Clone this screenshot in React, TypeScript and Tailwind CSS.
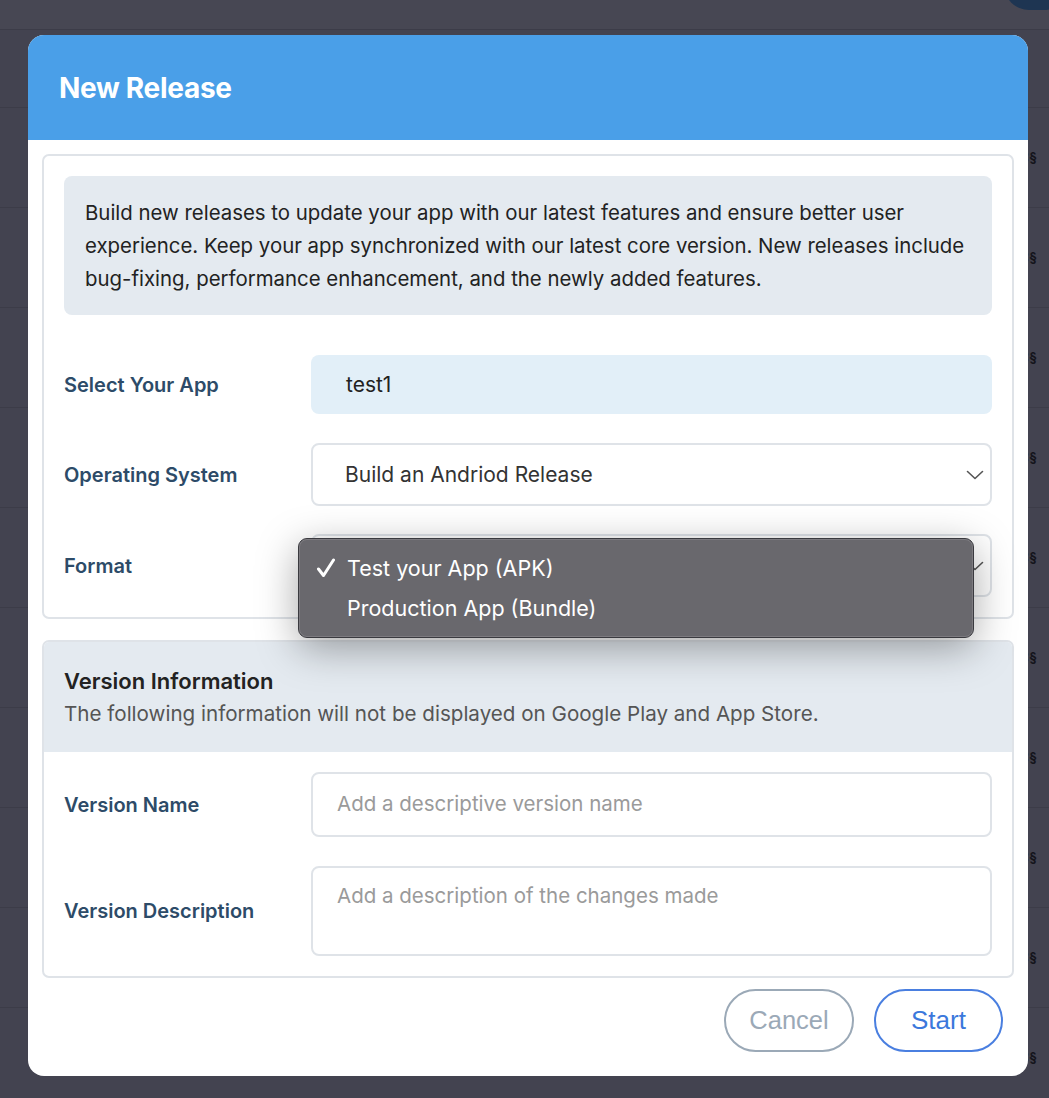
import React from "react";

const rows = [0, 1, 2, 3, 4, 5, 6, 7, 8, 9];

function Chevron() {
  return (
    <svg width="18" height="10" viewBox="0 0 18 10" fill="none">
      <path d="M1.5 1.5 L9 8.5 L16.5 1.5" stroke="#555" strokeWidth="1.6" strokeLinecap="round" strokeLinejoin="round" />
    </svg>
  );
}

function Check() {
  return (
    <svg width="20" height="20" viewBox="0 0 20 20" fill="none">
      <path d="M2.5 11 L7.5 17.5 L17.5 2" stroke="white" strokeWidth="3" strokeLinecap="round" strokeLinejoin="round" />
    </svg>
  );
}

export default function App() {
  return (
    <div className="relative h-[1098px] w-[1049px] overflow-hidden bg-[#434350]" style={{ fontFamily: "Inter, 'Liberation Sans', sans-serif" }}>
      {/* background page */}
      <div className="flex flex-col">
        <div className="h-[30px] border-b border-[#3c3c48] bg-[#474753]" />
        <div className="flex h-[78px] items-center justify-end border-b border-[#3c3c48] pr-[12px]" />
        {rows.map((i) => (
          <div key={i} className="flex h-[100px] items-center justify-end border-b border-[#3c3c48] pr-[12px]">
            <span className="text-[13px] font-bold text-[#15151c]">⌘§</span>
          </div>
        ))}
      </div>
      <div className="absolute right-[-20px] top-[-40px] h-[50px] w-[65px] rounded-full bg-[#1e3552]" />

      {/* modal */}
      <div className="absolute left-[28px] top-[35px] w-[1000px] rounded-[16px] bg-white">
        <div className="flex h-[105px] items-center rounded-t-[16px] bg-[#4a9fe8] px-[31px]">
          <h1 className="text-[28px] font-bold tracking-[-0.3px] text-white">New Release</h1>
        </div>

        <div className="flex flex-col px-[14px] pt-[14px]">
          {/* card 1 */}
          <div className="rounded-[7px] border-2 border-[#dfe3e8] p-[20px]">
            <div className="rounded-[8px] bg-[#e4eaf0] px-[21px] py-[20px] text-[20.4px] leading-[33px] text-[#222]">
              Build new releases to update your app with our latest features and ensure better user experience. Keep your app synchronized with our latest core version. New releases include bug-fixing, performance enhancement, and the newly added features.
            </div>

            <div className="mt-[40px] flex items-center">
              <div className="w-[247px] text-[20px] font-semibold text-[#2d4b68]">Select Your App</div>
              <div className="flex h-[59px] flex-1 items-center rounded-[8px] bg-[#e2eff8] px-[35px] text-[21px] text-[#222]">test1</div>
            </div>

            <div className="mt-[29px] flex items-center">
              <div className="w-[247px] text-[20px] font-semibold text-[#2d4b68]">Operating System</div>
              <div className="flex h-[63px] flex-1 items-center justify-between rounded-[8px] border-2 border-[#dfe3e8] pl-[32px] pr-[6px] text-[21px] text-[#333]">
                <span>Build an Andriod Release</span>
                <Chevron />
              </div>
            </div>

            <div className="mt-[28px] flex items-center">
              <div className="w-[247px] text-[20px] font-semibold text-[#2d4b68]">Format</div>
              <div className="flex h-[63px] flex-1 items-center justify-end rounded-[8px] border-2 border-[#dfe3e8] pr-[6px]">
                <Chevron />
              </div>
            </div>
          </div>

          {/* card 2 */}
          <div className="mt-[21px] overflow-hidden rounded-[7px] border-2 border-[#dfe3e8]">
            <div className="flex h-[110px] flex-col justify-center bg-[#e4eaf0] px-[20px]">
              <div className="text-[22px] font-semibold leading-[28px] text-[#222]">Version Information</div>
              <div className="mt-[6px] text-[20.6px] leading-[26px] text-[#555]">The following information will not be displayed on Google Play and App Store.</div>
            </div>
            <div className="flex flex-col px-[20px] pb-[20px] pt-[20px]">
              <div className="flex items-center">
                <div className="w-[247px] text-[20px] font-semibold text-[#2d4b68]">Version Name</div>
                <div className="flex h-[65px] flex-1 items-center rounded-[8px] border-2 border-[#dfe3e8] px-[24px] text-[20.5px] text-[#9a9a9a]">
                  Add a descriptive version name
                </div>
              </div>
              <div className="mt-[29px] flex items-center">
                <div className="w-[247px] text-[20px] font-semibold text-[#2d4b68]">Version Description</div>
                <div className="h-[90px] flex-1 rounded-[8px] border-2 border-[#dfe3e8] px-[24px] pt-[13px] text-[20.5px] text-[#9a9a9a]">
                  Add a description of the changes made
                </div>
              </div>
            </div>
          </div>

          {/* buttons */}
          <div className="mt-[11px] flex justify-end gap-[20px] pb-[24px] pr-[11px]" style={{ fontFamily: "'Liberation Sans', Arial, sans-serif" }}>
            <button className="h-[63px] w-[130px] rounded-full border-2 border-[#9ba9b7] text-[25.5px] text-[#9ba9b7]">Cancel</button>
            <button className="h-[63px] w-[129px] rounded-full border-2 border-[#4a7fe0] text-[26px] text-[#3b78dc]">Start</button>
          </div>
        </div>

        {/* dropdown menu */}
        <div className="absolute left-[270px] top-[503px] flex h-[100px] w-[676px] flex-col justify-center rounded-[9px] border border-[#3a3a3f] bg-[#69686d] shadow-[0_10px_40px_rgba(0,0,0,0.35)]">
          <div className="pointer-events-none absolute inset-0 rounded-[8px] border border-[#8a898e]/60" />
          <div className="flex h-[40px] items-center text-[21.5px] text-white">
            <span className="flex w-[48px] items-center pl-[17px]"><Check /></span>
            <span>Test your App (APK)</span>
          </div>
          <div className="flex h-[40px] items-center text-[21.5px] text-white">
            <span className="w-[48px]" />
            <span>Production App (Bundle)</span>
          </div>
        </div>
      </div>
    </div>
  );
}
